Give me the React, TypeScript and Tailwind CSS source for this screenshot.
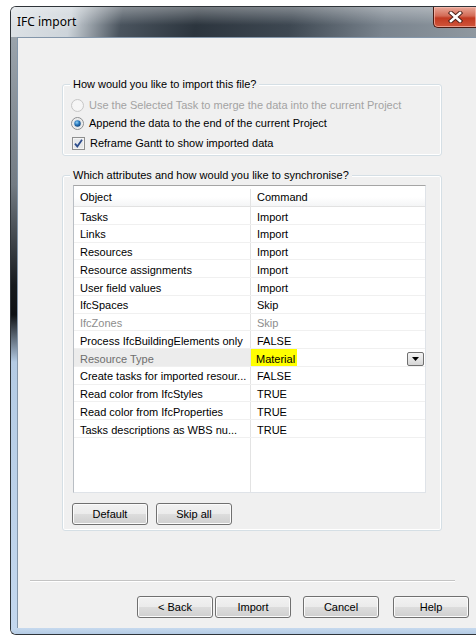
import React from "react";

type Row = { obj: string; cmd: string; dim?: boolean; selected?: boolean };

const rows: Row[] = [
  { obj: "Tasks", cmd: "Import" },
  { obj: "Links", cmd: "Import" },
  { obj: "Resources", cmd: "Import" },
  { obj: "Resource assignments", cmd: "Import" },
  { obj: "User field values", cmd: "Import" },
  { obj: "IfcSpaces", cmd: "Skip" },
  { obj: "IfcZones", cmd: "Skip", dim: true },
  { obj: "Process IfcBuildingElements only", cmd: "FALSE" },
  { obj: "Resource Type", cmd: "Material", selected: true },
  { obj: "Create tasks for imported resour...", cmd: "FALSE" },
  { obj: "Read color from IfcStyles", cmd: "TRUE" },
  { obj: "Read color from IfcProperties", cmd: "TRUE" },
  { obj: "Tasks descriptions as WBS nu...", cmd: "TRUE" },
];

// classic win7 push button
const WinButton = ({ label, className = "" }: { label: string; className?: string }) => (
  <button
    className={
      "h-[22px] w-[76px] shrink-0 rounded-[3px] border border-[#707070] bg-[linear-gradient(#f2f2f2_0%,#ebebeb_50%,#dddddd_50%,#cfcfcf_100%)] text-[11px] leading-none text-black shadow-[inset_0_0_0_1px_#fbfbfb] " +
      className
    }
  >
    {label}
  </button>
);

const Radio = ({ checked, disabled }: { checked?: boolean; disabled?: boolean }) => (
  <svg width="13" height="13" viewBox="0 0 13 13" className="shrink-0">
    <defs>
      <radialGradient id="dot" cx="0.4" cy="0.35" r="0.7">
        <stop offset="0" stopColor="#8fd0f5" />
        <stop offset="0.5" stopColor="#2a7ac0" />
        <stop offset="1" stopColor="#0d3f73" />
      </radialGradient>
    </defs>
    <circle cx="6.5" cy="6.5" r="6" fill={disabled ? "#f4f4f4" : "#f0f0f0"} stroke={disabled ? "#c6c6c6" : "#8c8e90"} />
    <circle cx="6.5" cy="6.5" r="4.6" fill={disabled ? "#f6f6f6" : "#e4e6e8"} />
    {checked && <circle cx="6.5" cy="6.5" r="3.2" fill="url(#dot)" />}
  </svg>
);

const Checkbox = () => (
  <svg width="13" height="13" viewBox="0 0 13 13" className="shrink-0">
    <rect x="0.5" y="0.5" width="12" height="12" fill="#f4f4f4" stroke="#8e8f8f" />
    <rect x="2" y="2" width="9" height="9" fill="#e6e8ea" />
    <path d="M3 6.6 L5.3 9.4 L10 2.8" fill="none" stroke="#2d4d8c" strokeWidth="1.8" />
  </svg>
);

const GroupBox = ({ title, className, children }: { title: string; className: string; children: React.ReactNode }) => (
  <div className={"relative rounded-[3px] border border-[#d5dfe5] shadow-[inset_0_0_0_1px_#ffffff] " + className}>
    <span className="absolute -top-[7px] left-[7px] bg-[#f0f0f0] px-[3px] text-[11px] leading-[13px] text-black">
      {title}
    </span>
    {children}
  </div>
);

export default function App() {
  return (
    <div className="h-[635px] w-[476px] overflow-hidden bg-white font-['Liberation_Sans',Arial,sans-serif]">
      <div className="ml-[10px] mt-[6px] flex h-[629px] w-[466px] flex-col overflow-hidden rounded-tl-[6px] rounded-bl-[6px] border-t border-b border-l border-[#2f3439]">
        {/* glass title bar */}
        <div className="flex h-[30px] shrink-0 bg-[linear-gradient(100deg,#dde2e6_0%,#cdd4da_13%,#4a545e_24%,#2c353e_40%,#3e4852_60%,#7a848e_80%,#8f98a0_100%)]">
          <div className="flex flex-1 items-center bg-[linear-gradient(rgba(255,255,255,0.35),rgba(255,255,255,0)_60%)] pl-[6px]">
            <span className="font-['Noto_Sans',sans-serif] text-[12px] text-black [text-shadow:0_0_6px_rgba(255,255,255,0.95)]">
              IFC import
            </span>
          </div>
          <div className="flex h-[21px] w-[43px] items-center justify-center rounded-bl-[5px] border-b border-l border-[#4a1a12] bg-[linear-gradient(#e9a899_0%,#d36a55_45%,#c23a22_55%,#d0553a_100%)] shadow-[inset_0_0_0_1px_rgba(255,200,190,0.6)]">
            <svg width="15" height="12" viewBox="0 0 15 12">
              <path d="M3 2 L12 10 M12 2 L3 10" stroke="#4a2018" strokeWidth="4.4" strokeLinecap="square" />
              <path d="M3 2 L12 10 M12 2 L3 10" stroke="#ffffff" strokeWidth="2.6" strokeLinecap="square" />
            </svg>
          </div>
        </div>

        <div className="flex flex-1">
          {/* left frame */}
          <div className="w-[6px] shrink-0 bg-[linear-gradient(#9ba4ac_0%,#737b83_25%,#161a1e_42%,#0e1114_47%,#b4cbe4_55%,#c3d7ee_100%)]" />

          {/* client area */}
          <div className="flex flex-1 flex-col border-t border-l border-[#8396aa] bg-[#f0f0f0]">
            <GroupBox title="How would you like to import this file?" className="ml-[44px] mt-[46px] w-[380px] pt-[11px] pb-[3px]">
              <div className="flex h-[18px] items-center gap-[5px] pl-[8px] text-[11px] text-[#a3a3a3]">
                <Radio disabled />
                <span>Use the Selected Task to merge the data into the current Project</span>
              </div>
              <div className="flex h-[18px] items-center gap-[5px] pl-[8px] text-[11px] text-black">
                <Radio checked />
                <span>Append the data to the end of the current Project</span>
              </div>
              <div className="mt-[2px] flex h-[18px] items-center gap-[5px] pl-[9px] text-[11px] text-black">
                <Checkbox />
                <span>Reframe Gantt to show imported data</span>
              </div>
            </GroupBox>

            <GroupBox title="Which attributes and how would you like to synchronise?" className="ml-[44px] mt-[19px] w-[380px] pt-[9px] pb-[5px]">
              <div className="ml-[10px] flex h-[308px] w-[353px] flex-col border border-t-[#a5a5a5] border-r-[#dfe3e8] border-b-[#dfe3e8] border-l-[#b9bec4] bg-white text-[11px]">
                <div className="flex h-[21px] shrink-0 border-b border-[#e2e2e2] bg-[linear-gradient(#ffffff_0%,#ffffff_55%,#f4f5f6_100%)] pt-[3px]">
                  <div className="flex w-[177px] items-center border-r border-[#e3e3e3] pl-[6px]">Object</div>
                  <div className="flex flex-1 items-center pl-[6px]">Command</div>
                </div>
                {rows.map((r, i) => (
                  <div key={i} className="flex h-[17.75px] shrink-0 border-b border-[#f0f0f0]">
                    <div
                      className={
                        "flex w-[177px] items-center overflow-hidden whitespace-nowrap border-r border-[#e3e3e3] pl-[6px] pt-[3px] " +
                        (r.selected ? "bg-[#ececec] text-[#6e6e6e]" : r.dim ? "text-[#8d8d8d]" : "text-black")
                      }
                    >
                      {r.obj}
                    </div>
                    {r.selected ? (
                      <div className="flex flex-1 items-stretch justify-between">
                        <span className="flex items-center bg-[#ffff00] pl-[5px] pr-[2px] pt-[3px] text-black">{r.cmd}</span>
                        <div className="mr-[1px] mt-[3px] flex h-[14px] w-[17px] items-center justify-center rounded-[2px] border border-[#707070] bg-[linear-gradient(#f4f4f4_0%,#e6e6e6_50%,#d6d6d6_100%)]">
                          <svg width="7" height="4" viewBox="0 0 7 4">
                            <path d="M0 0 H7 L3.5 4 Z" fill="#000" />
                          </svg>
                        </div>
                      </div>
                    ) : (
                      <div className={"flex flex-1 items-center pl-[6px] pt-[3px] " + (r.dim ? "text-[#8d8d8d]" : "text-black")}>
                        {r.cmd}
                      </div>
                    )}
                  </div>
                ))}
                <div className="flex flex-1">
                  <div className="w-[177px] border-r border-[#e3e3e3]" />
                  <div className="flex-1" />
                </div>
              </div>
              <div className="ml-[9px] mt-[10px] flex gap-[8px]">
                <WinButton label="Default" className="h-[21px]" />
                <WinButton label="Skip all" className="h-[21px]" />
              </div>
            </GroupBox>

            <div className="ml-[12px] mt-[49px] w-[425px] border-t border-b border-t-[#c4c4c4] border-b-white" />

            <div className="ml-[119px] mt-[14px] flex">
              <WinButton label="< Back" />
              <WinButton label="Import" className="ml-[2px]" />
              <WinButton label="Cancel" className="ml-[12px]" />
              <WinButton label="Help" className="ml-[14px]" />
            </div>
          </div>
        </div>

        {/* bottom frame */}
        <div className="h-[6px] shrink-0 bg-[linear-gradient(#c6d9ee,#b4cbe4)]" />
      </div>
    </div>
  );
}
